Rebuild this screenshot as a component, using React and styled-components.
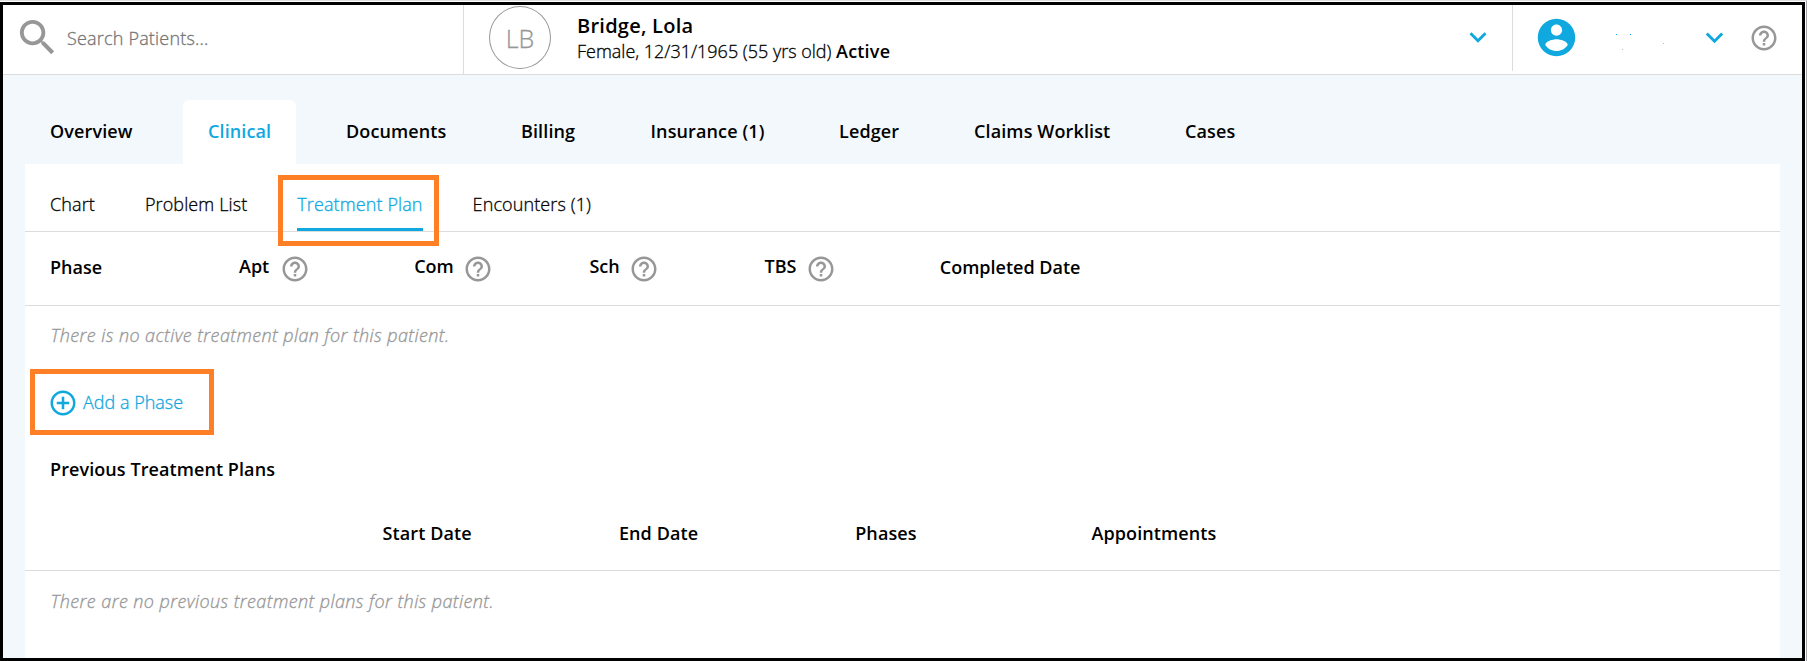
import React from "react";
import styled, { createGlobalStyle } from "styled-components";

const BLUE = "#0fa8df";
const GREY = "#979797";
const LINE = "#dcdcdc";

const GlobalStyle = createGlobalStyle`
  *, *::before, *::after { box-sizing: border-box; }
  body {
    margin: 0;
    background: #fff;
    color: #000;
    font-family: "Open Sans", "Noto Sans", sans-serif;
    font-size: 18px;
    font-weight: 300;
    line-height: 24px;
  }
`;

const Page = styled.div`
  height: 661px;
  padding: 1px 1px 0 0;
  border-top: 1px solid #dedee1;
  border-right: 1px solid #a3a3ab;
  overflow: hidden;
`;

const Frame = styled.div`
  display: flex;
  flex-direction: column;
  height: 659px;
  border: 3px solid #000;
  background: #f2f8fc;
`;

const Header = styled.header`
  display: flex;
  height: 70px;
  flex: none;
  background: #fff;
  border-bottom: 1px solid ${LINE};
`;

const Icon = styled.svg`
  display: block;
  flex: none;
  width: ${(p) => p.$size}px;
  height: ${(p) => p.$size}px;
  fill: ${(p) => p.$color || GREY};
`;

const Search = styled.div`
  display: flex;
  align-items: center;
  width: 461px;
  padding: 0 0 4px 11px;
  border-right: 1px solid ${LINE};
`;

const SearchHint = styled.span`
  margin: 1px 0 0 6px;
  color: #757575;
  letter-spacing: 0.19px;
  white-space: nowrap;
  -webkit-text-stroke: 0.3px currentColor;
`;

const Patient = styled.div`
  display: flex;
  flex: 1;
  height: 66px;
  padding-right: 17px;
  border-right: 1px solid ${LINE};
`;

const Avatar = styled.div`
  width: 62px;
  height: 63px;
  margin: 1px 26px 0 25px;
  border: 1px solid ${GREY};
  border-radius: 50%;
  color: ${GREY};
  font-size: 25px;
  line-height: 62px;
  text-align: center;
  -webkit-text-stroke: 0.3px currentColor;
`;

const PatientText = styled.div`
  flex: 1;
  padding-top: 8px;
  white-space: nowrap;
`;

const PatientName = styled.div`
  font-size: 20px;
  font-weight: 600;
  letter-spacing: 0.25px;
  line-height: 26px;
`;

const Details = styled.div`
  letter-spacing: -0.01px;
  line-height: 25px;
  -webkit-text-stroke: 0.3px currentColor;
`;

const Strong = styled.strong`
  font-weight: 600;
  letter-spacing: 0.2px;
  -webkit-text-stroke: 0;
`;

const ChevronSlot = styled.div`
  padding-top: 15px;
`;

const Account = styled.div`
  display: flex;
  width: 289px;
  padding-left: 21px;
`;

const AccountIcon = styled.div`
  padding-top: 10px;
`;

const AccountName = styled.svg`
  width: 98px;
  height: 60px;
  margin-left: 19px;
`;

const AccountChevron = styled.div`
  margin-left: 1px;
  padding-top: 15px;
`;

const HelpSlot = styled.div`
  margin-left: 17px;
  padding-top: 18px;
`;

const Tabs = styled.nav`
  display: flex;
  flex: none;
  gap: 25px;
  height: 89px;
  padding: 25px 22px 0;
`;

const Tab = styled.div`
  width: ${(p) => p.$width}px;
  padding: 19px 0 0 25px;
  border-radius: 6px 6px 0 0;
  background: ${(p) => (p.$active ? "#fff" : "transparent")};
  color: ${(p) => (p.$active ? BLUE : "#000")};
  font-weight: 600;
  letter-spacing: 0.12px;
  white-space: nowrap;
`;

const Panel = styled.main`
  flex: 1;
  margin: 0 22px;
  background: #fff;
`;

const SubTabs = styled.nav`
  display: flex;
  gap: 50px;
  height: 68px;
  padding: 0 25px;
  border-bottom: 1px solid ${LINE};
`;

const SubTab = styled.div`
  position: relative;
  height: 67px;
  padding-top: 28px;
  border-bottom: 3px solid ${(p) => (p.$active ? BLUE : "transparent")};
  color: ${(p) => (p.$active ? BLUE : "#000")};
  letter-spacing: 0.11px;
  white-space: nowrap;
  -webkit-text-stroke: 0.3px currentColor;
`;

const Highlight = styled.div`
  position: absolute;
  top: ${(p) => p.$top}px;
  left: ${(p) => p.$left}px;
  width: ${(p) => p.$width}px;
  height: ${(p) => p.$height}px;
  border: 5px solid #ff7f27;
`;

const PhaseHead = styled.div`
  display: grid;
  grid-template-columns: 189px repeat(4, 175.2px) 1fr;
  height: 74px;
  padding: 23px 25px 0;
  border-bottom: 1px solid ${LINE};
  font-weight: 600;
`;

const HelpCell = styled.div`
  display: flex;
  gap: ${(p) => p.$gap}px;
  margin-top: -1px;
`;

const Empty = styled.p`
  margin: 0;
  padding: ${(p) => p.$top}px 25.5px 0;
  color: ${GREY};
  font-style: italic;
  letter-spacing: 0.41px;
  -webkit-text-stroke: 0.3px currentColor;
`;

const AddPhase = styled.div`
  position: relative;
  display: flex;
  gap: 5px;
  width: 180px;
  height: 30px;
  margin: 41px 0 0 23px;
  color: ${BLUE};
  line-height: 29px;
  -webkit-text-stroke: 0.3px currentColor;
`;

const SectionTitle = styled.h2`
  margin: 39px 25px 0;
  font-size: 18px;
  font-weight: 600;
  letter-spacing: 0.08px;
  line-height: 24px;
`;

const PreviousHead = styled.div`
  display: grid;
  grid-template-columns: 332.6px repeat(3, 236.3px) 1fr;
  height: 90px;
  padding: 40px 25px 0;
  border-bottom: 1px solid ${LINE};
  font-weight: 600;
  letter-spacing: 0.1px;
`;

const PATHS = {
  search:
    "M15.5 14h-.79l-.28-.27C15.41 12.59 16 11.11 16 9.5 16 5.91 13.09 3 9.5 3S3 5.91 3 9.5 5.91 16 9.5 16c1.61 0 3.09-.59 4.23-1.57l.27.28v.79l5 4.99L20.49 19l-4.99-5zm-6 0C7.01 14 5 11.99 5 9.5S7.01 5 9.5 5 14 7.01 14 9.5 11.99 14 9.5 14z",
  chevron: "M16.59 8.59L12 13.17 7.41 8.59 6 10l6 6 6-6z",
  account:
    "M12 2C6.48 2 2 6.48 2 12s4.48 10 10 10 10-4.48 10-10S17.52 2 12 2zm0 3c1.66 0 3 1.34 3 3s-1.34 3-3 3-3-1.34-3-3 1.34-3 3-3zm0 14.2c-2.5 0-4.71-1.28-6-3.22.03-1.99 4-3.08 6-3.08 1.99 0 5.97 1.09 6 3.08-1.29 1.94-3.5 3.22-6 3.22z",
  help:
    "M11 18h2v-2h-2v2zm1-16C6.48 2 2 6.48 2 12s4.48 10 10 10 10-4.48 10-10S17.52 2 12 2zm0 18c-4.41 0-8-3.59-8-8s3.59-8 8-8 8 3.59 8 8-3.59 8-8 8zm0-14c-2.21 0-4 1.79-4 4h2c0-1.1.9-2 2-2s2 .9 2 2c0 2-3 1.75-3 5h2c0-2.25 3-2.5 3-5 0-2.21-1.79-4-4-4z",
  add:
    "M13 7h-2v4H7v2h4v4h2v-4h4v-2h-4V7zm-1-5C6.48 2 2 6.48 2 12s4.48 10 10 10 10-4.48 10-10S17.52 2 12 2zm0 18c-4.41 0-8-3.59-8-8s3.59-8 8-8 8 3.59 8 8-3.59 8-8 8z",
};

const Glyph = ({ name, size, color }) => (
  <Icon viewBox="0 0 24 24" $size={size} $color={color}>
    <path d={PATHS[name]} />
  </Icon>
);

const TABS = [
  { label: "Overview", width: 133 },
  { label: "Clinical", width: 113 },
  { label: "Documents", width: 150 },
  { label: "Billing", width: 104.5 },
  { label: "Insurance (1)", width: 163.5 },
  { label: "Ledger", width: 110 },
  { label: "Claims Worklist", width: 186 },
  { label: "Cases", width: 100 },
];
const SUB_TABS = ["Chart", "Problem List", "Treatment Plan", "Encounters (1)"];
const COUNTS = [
  { label: "Apt", gap: 11 },
  { label: "Com", gap: 9 },
  { label: "Sch", gap: 9 },
  { label: "TBS", gap: 9 },
];

export default function App() {
  return (
    <>
      <GlobalStyle />
      <Page>
        <Frame>
          <Header>
            <Search>
              <Glyph name="search" size={47} />
              <SearchHint>Search Patients...</SearchHint>
            </Search>
            <Patient>
              <Avatar>LB</Avatar>
              <PatientText>
                <PatientName>Bridge, Lola</PatientName>
                <Details>
                  Female, 12/31/1965 (55 yrs old) <Strong>Active</Strong>
                </Details>
              </PatientText>
              <ChevronSlot>
                <Glyph name="chevron" size={34} color={BLUE} />
              </ChevronSlot>
            </Patient>
            <Account>
              <AccountIcon>
                <Glyph name="account" size={45} color={BLUE} />
              </AccountIcon>
              <AccountName viewBox="0 0 98 60">
                <path d="M18 29h1v1h-1zM32 29h1v1h-1z" fill={BLUE} />
                <path d="M24 44h1v1h-1zM65 38h1v1h-1z" fill="#b9b9b9" />
              </AccountName>
              <AccountChevron>
                <Glyph name="chevron" size={35} color={BLUE} />
              </AccountChevron>
              <HelpSlot>
                <Glyph name="help" size={30} />
              </HelpSlot>
            </Account>
          </Header>
          <Tabs>
            {TABS.map(({ label, width }) => (
              <Tab key={label} $width={width} $active={label === "Clinical"}>
                {label}
              </Tab>
            ))}
          </Tabs>
          <Panel>
            <SubTabs>
              {SUB_TABS.map((t) => (
                <SubTab key={t} $active={t === "Treatment Plan"}>
                  {t}
                  {t === "Treatment Plan" && <Highlight $top={11} $left={-19} $width={161} $height={71} />}
                </SubTab>
              ))}
            </SubTabs>
            <PhaseHead>
              <span>Phase</span>
              {COUNTS.map(({ label, gap }) => (
                <HelpCell key={label} $gap={gap}>
                  {label}
                  <Glyph name="help" size={30} />
                </HelpCell>
              ))}
              <span>Completed Date</span>
            </PhaseHead>
            <Empty $top={17}>There is no active treatment plan for this patient.</Empty>
            <AddPhase>
              <Glyph name="add" size={30} color={BLUE} />
              Add a Phase
              <Highlight $top={-19} $left={-18} $width={184} $height={66} />
            </AddPhase>
            <SectionTitle>Previous Treatment Plans</SectionTitle>
            <PreviousHead>
              <span />
              <span>Start Date</span>
              <span>End Date</span>
              <span>Phases</span>
              <span>Appointments</span>
            </PreviousHead>
            <Empty $top={18}>There are no previous treatment plans for this patient.</Empty>
          </Panel>
        </Frame>
      </Page>
    </>
  );
}
